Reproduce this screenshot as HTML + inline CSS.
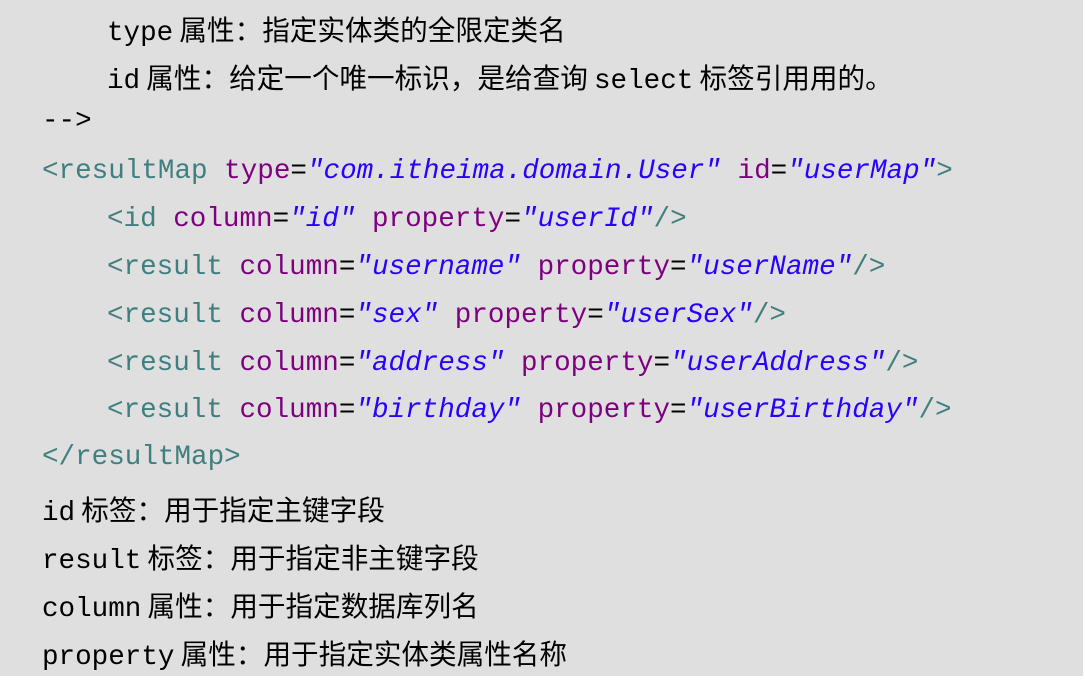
<!DOCTYPE html>
<html><head><meta charset="utf-8"><style>
html,body{margin:0;padding:0;}
body{width:1085px;height:685px;background:#fff;position:relative;overflow:hidden;}
#bg{position:absolute;left:0;top:0;width:1083px;height:676px;background:#dfdfdf;}
.l{position:absolute;height:48px;line-height:48px;white-space:pre;font-family:"Liberation Mono","Noto Sans CJK SC",monospace;font-size:27.6px;color:#000;}
.c{font-family:"Noto Sans CJK SC",sans-serif;font-size:27.6px;}
.t{color:#3f7f7f}.a{color:#7f007f}.v{color:#2a00ff;font-style:italic}
</style></head><body><div id="bg"></div>
<div class="l" style="left:107px;top:4px">type<span class="c"> 属性：指定实体类的全限定类名</span></div>
<div class="l" style="left:107px;top:52px">id<span class="c"> 属性：给定一个唯一标识，是给查询 </span>select<span class="c"> 标签引用用的。</span></div>
<div class="l" style="left:42px;top:98px">--&gt;</div>
<div class="l" style="left:42px;top:148px"><span class="t">&lt;resultMap</span> <span class="a">type</span>=<span class="v">"com.itheima.domain.User"</span> <span class="a">id</span>=<span class="v">"userMap"</span><span class="t">&gt;</span></div>
<div class="l" style="left:107px;top:196px"><span class="t">&lt;id</span> <span class="a">column</span>=<span class="v">"id"</span> <span class="a">property</span>=<span class="v">"userId"</span><span class="t">/&gt;</span></div>
<div class="l" style="left:107px;top:244px"><span class="t">&lt;result</span> <span class="a">column</span>=<span class="v">"username"</span> <span class="a">property</span>=<span class="v">"userName"</span><span class="t">/&gt;</span></div>
<div class="l" style="left:107px;top:292px"><span class="t">&lt;result</span> <span class="a">column</span>=<span class="v">"sex"</span> <span class="a">property</span>=<span class="v">"userSex"</span><span class="t">/&gt;</span></div>
<div class="l" style="left:107px;top:340px"><span class="t">&lt;result</span> <span class="a">column</span>=<span class="v">"address"</span> <span class="a">property</span>=<span class="v">"userAddress"</span><span class="t">/&gt;</span></div>
<div class="l" style="left:107px;top:387px"><span class="t">&lt;result</span> <span class="a">column</span>=<span class="v">"birthday"</span> <span class="a">property</span>=<span class="v">"userBirthday"</span><span class="t">/&gt;</span></div>
<div class="l" style="left:42px;top:434px"><span class="t">&lt;/resultMap&gt;</span></div>
<div class="l" style="left:42px;top:484px">id<span class="c"> 标签：用于指定主键字段</span></div>
<div class="l" style="left:42px;top:532px">result<span class="c"> 标签：用于指定非主键字段</span></div>
<div class="l" style="left:42px;top:580px">column<span class="c"> 属性：用于指定数据库列名</span></div>
<div class="l" style="left:42px;top:628px">property<span class="c"> 属性：用于指定实体类属性名称</span></div>
</body></html>
